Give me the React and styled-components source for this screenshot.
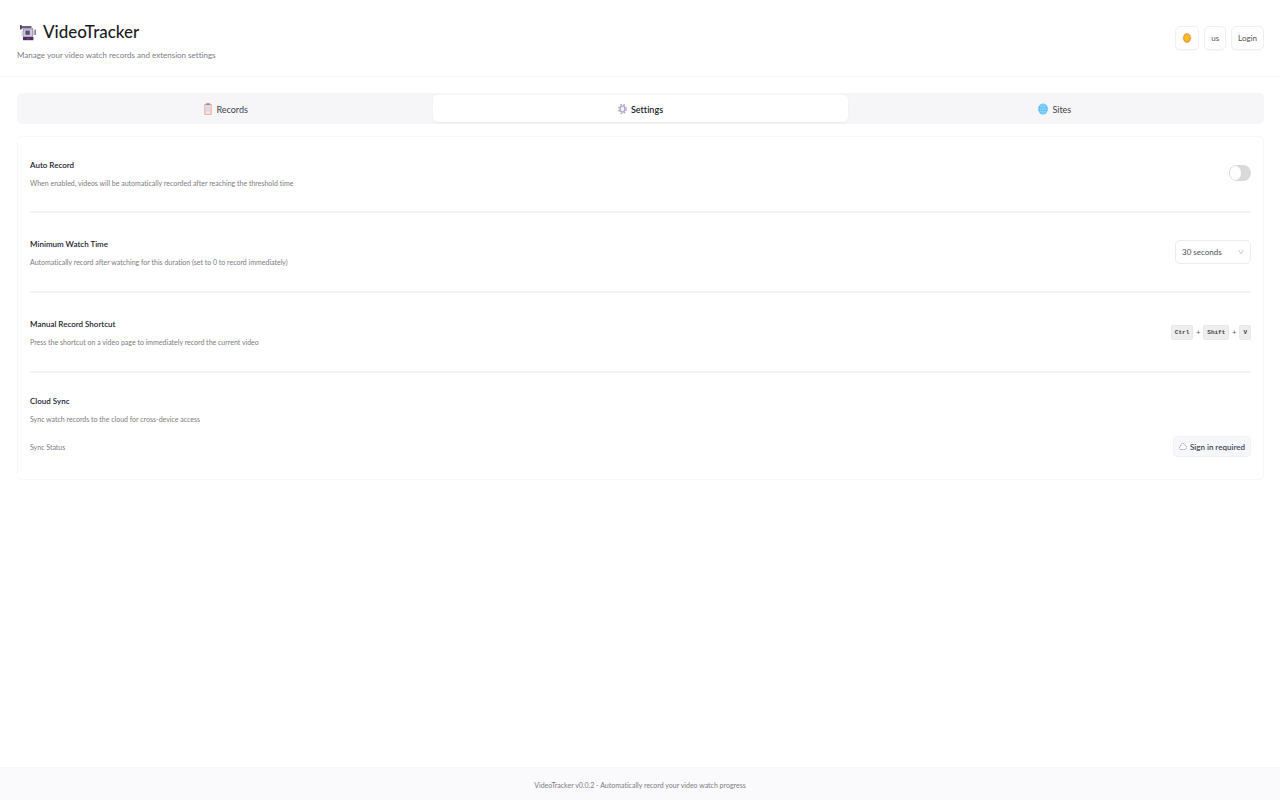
import React, { useState } from "react";
import styled, { createGlobalStyle } from "styled-components";

const TABS = [
  { id: "records", label: "Records", icon: ClipboardIcon },
  { id: "settings", label: "Settings", icon: GearIcon },
  { id: "sites", label: "Sites", icon: GlobeIcon },
];

const SHORTCUT = ["Ctrl", "Shift", "V"];

function CameraIcon() {
  return (
    <svg width="18" height="20" viewBox="0 0 18 20" aria-hidden="true">
      <path d="M1.5 4h11v2.5h-11z" fill="#6a6080" />
      <path d="M1 3h1.6v4.6H1z" fill="#4a3f5c" />
      <rect x="3.8" y="6" width="10.4" height="9.5" fill="#a79fb9" />
      <rect x="5" y="7.5" width="8" height="6.8" fill="#cdc8da" />
      <rect x="6.4" y="8.6" width="4.4" height="4.2" fill="#5a4f6e" />
      <path d="M2.6 9h1.8v5H2.6z" fill="#d5d0e0" />
      <path d="M14.2 8.5h1.3v4.5h-1.3z" fill="#cdc8da" />
      <rect x="15.4" y="7.6" width="1.6" height="5.4" fill="#8d84a2" />
      <rect x="4" y="15" width="10.4" height="3.2" fill="#4b2f63" />
      <rect x="7.6" y="16" width="2.8" height="1.2" fill="#a03a6a" />
    </svg>
  );
}

function SunIcon() {
  return (
    <svg width="10" height="10" viewBox="0 0 10 10" aria-hidden="true">
      <ellipse cx="5" cy="5" rx="3.7" ry="4.6" fill="#f3a23a" />
      <ellipse cx="5" cy="5" rx="3.7" ry="4.5" fill="none" stroke="#e8862c" strokeWidth=".8" strokeDasharray="1.4 .8" />
      <ellipse cx="5" cy="5" rx="2.4" ry="3.2" fill="#fcc021" />
    </svg>
  );
}

function ClipboardIcon() {
  return (
    <svg width="8" height="12" viewBox="0 0 8 12" aria-hidden="true">
      <rect x=".4" y=".8" width="7.2" height="11" rx=".8" fill="#e8a37e" />
      <rect x="1.4" y="2" width="5.2" height="8.8" fill="#efeaf5" />
      <rect x="2.4" y=".3" width="3.2" height="2" rx=".5" fill="#8f86a3" />
      <path d="M2.2 4.4h3.6M2.2 6.2h3.6M2.2 8h3.6" stroke="#c3bcd6" strokeWidth=".7" />
    </svg>
  );
}

function GearIcon() {
  return (
    <svg width="9" height="12" viewBox="0 0 9 12" aria-hidden="true">
      <ellipse cx="4.5" cy="6" rx="3.7" ry="4.6" fill="none" stroke="#b5abcf" strokeWidth="1.4" strokeDasharray="1.7 1.65" />
      <ellipse cx="4.5" cy="6" rx="2.4" ry="3.1" fill="#f5f2fa" stroke="#b0a6cb" strokeWidth="1.4" />
    </svg>
  );
}

function GlobeIcon() {
  return (
    <svg width="10" height="12" viewBox="0 0 10 12" aria-hidden="true">
      <ellipse cx="5" cy="6" rx="4.8" ry="5.6" fill="#48b9f2" />
      <g fill="none" stroke="#b4e4fb" strokeWidth=".6">
        <ellipse cx="5" cy="6" rx="2.2" ry="5.5" />
        <path d="M5 .5v11M.3 6h9.4M1 3.2h8M1 8.8h8" />
      </g>
    </svg>
  );
}

function CloudIcon() {
  return (
    <svg width="8" height="9" viewBox="0 0 8 9" aria-hidden="true">
      <path
        d="M1.8 7.5C.8 7.5.4 6.7.4 5.9c0-.9.5-1.5 1.2-1.6C1.6 2.7 2.6 1.5 4 1.5c1.2 0 2 .9 2.2 2.1.9.2 1.4.9 1.4 1.9s-.6 2-1.6 2z"
        fill="#fff"
        stroke="#8f8f99"
        strokeWidth=".7"
        strokeDasharray="1.6 .5"
      />
    </svg>
  );
}

function ChevronIcon() {
  return (
    <svg width="6" height="6" viewBox="0 0 6 6" aria-hidden="true">
      <path d="M.5 1 3 4.8 5.5 1" fill="none" stroke="#bcbcc0" strokeWidth=".8" />
    </svg>
  );
}

export default function App() {
  const [activeTab, setActiveTab] = useState("settings");
  const [autoRecord, setAutoRecord] = useState(false);
  const [minTime, setMinTime] = useState("30");

  return (
    <Page>
      <GlobalStyle />
      <Header>
        <div>
          <Brand>
            <CameraIcon />
            VideoTracker
          </Brand>
          <Subtitle>Manage your video watch records and extension settings</Subtitle>
        </div>
        <Actions>
          <ActionButton type="button" aria-label="Toggle theme">
            <SunIcon />
          </ActionButton>
          <ActionButton type="button">us</ActionButton>
          <ActionButton type="button">Login</ActionButton>
        </Actions>
      </Header>

      <Main>
        <Tabs role="tablist">
          {TABS.map(({ id, label, icon: Icon }) => (
            <Tab
              key={id}
              type="button"
              role="tab"
              aria-selected={activeTab === id}
              $active={activeTab === id}
              onClick={() => setActiveTab(id)}
            >
              <Icon />
              {label}
            </Tab>
          ))}
        </Tabs>

        <Card>
          <Row>
            <div>
              <RowTitle as="label" htmlFor="auto-record">Auto Record</RowTitle>
              <RowText>
                When enabled, videos will be automatically recorded after reaching the threshold time
              </RowText>
            </div>
            <Switch
              id="auto-record"
              type="checkbox"
              checked={autoRecord}
              onChange={(e) => setAutoRecord(e.target.checked)}
            />
          </Row>
          <Row>
            <div>
              <RowTitle as="label" htmlFor="min-time">Minimum Watch Time</RowTitle>
              <RowText>
                Automatically record after watching for this duration (set to 0 to record immediately)
              </RowText>
            </div>
            <SelectBox>
              <Select id="min-time" value={minTime} onChange={(e) => setMinTime(e.target.value)}>
                <option value="30">30 seconds</option>
              </Select>
              <ChevronIcon />
            </SelectBox>
          </Row>
          <Row>
            <div>
              <RowTitle>Manual Record Shortcut</RowTitle>
              <RowText>Press the shortcut on a video page to immediately record the current video</RowText>
            </div>
            <Keys>
              {SHORTCUT.map((key, i) => (
                <React.Fragment key={key}>
                  {i > 0 && <span>+</span>}
                  <Key>{key}</Key>
                </React.Fragment>
              ))}
            </Keys>
          </Row>
          <Section>
            <RowTitle>Cloud Sync</RowTitle>
            <RowText>Sync watch records to the cloud for cross-device access</RowText>
            <StatusRow>
              <RowText>Sync Status</RowText>
              <Badge>
                <CloudIcon />
                Sign in required
              </Badge>
            </StatusRow>
          </Section>
        </Card>
      </Main>

      <Footer>VideoTracker v0.0.2 - Automatically record your video watch progress</Footer>
    </Page>
  );
}

const GlobalStyle = createGlobalStyle`
  * {
    box-sizing: border-box;
  }

  body {
    margin: 0;
    background: #fff;
    color: #1d1d1f;
    font-family: Lato, "Noto Sans", sans-serif;
    font-size: 8px;
    font-variant-ligatures: none;
  }

  button,
  select {
    font-family: inherit;
    font-variant-ligatures: inherit;
  }

  svg {
    display: block;
    flex: none;
  }
`;

const Page = styled.div`
  display: flex;
  flex-direction: column;
  min-height: 100vh;
`;

const Header = styled.header`
  display: flex;
  align-items: flex-start;
  justify-content: space-between;
  padding: 18px 16px 12px;
  border-bottom: 1px solid #f5f5f7;
`;

const Brand = styled.h1`
  display: flex;
  align-items: center;
  gap: 6px;
  margin: 0;
  padding-left: 3px;
  font-size: 17px;
  font-weight: 500;
  line-height: 28px;
`;

const Subtitle = styled.p`
  margin: 0;
  padding-left: 1px;
  color: #7c7c81;
  font-size: 8px;
  line-height: 18px;
`;

const Actions = styled.div`
  display: flex;
  gap: 5px;
  padding-top: 8px;
`;

const ActionButton = styled.button`
  display: flex;
  align-items: center;
  justify-content: center;
  height: 24px;
  padding: 0 6px;
  border: 1px solid #f0f0f2;
  border-radius: 5px;
  background: #fff;
  box-shadow: 0 1px 1px rgba(0, 0, 0, 0.03);
  color: #515154;
  font-size: 8px;
`;

const Main = styled.main`
  display: flex;
  flex: 1;
  flex-direction: column;
  gap: 12px;
  padding: 16px 16px 24px 17px;
`;

const Tabs = styled.div`
  display: flex;
  padding: 2px;
  border-radius: 5px;
  background: #f6f6f9;
`;

const Tab = styled.button`
  display: flex;
  flex: 1;
  align-items: center;
  justify-content: center;
  gap: 4px;
  height: 27px;
  padding: 1px 0 0;
  border: 0;
  border-radius: 5px;
  background: ${({ $active }) => ($active ? "#fff" : "transparent")};
  box-shadow: ${({ $active }) => ($active ? "0 1px 2px rgba(0, 0, 0, 0.05)" : "none")};
  color: ${({ $active }) => ($active ? "#1d1d1f" : "#424245")};
  font-size: 9px;
  font-weight: ${({ $active }) => ($active ? 600 : 400)};
`;

const Card = styled.section`
  padding: 0 12px;
  border: 1px solid #f8f8fa;
  border-radius: 5px;
`;

const Row = styled.div`
  display: flex;
  align-items: center;
  justify-content: space-between;
  padding: 21px 0;
  border-bottom: 2px solid #f3f3f8;

  &:first-child {
    padding: 18px 0 20px;
  }
`;

const RowTitle = styled.h2`
  display: block;
  margin: 0;
  color: #1a1a2e;
  font-size: 8px;
  font-weight: 600;
  line-height: 20px;
`;

const RowText = styled.p`
  margin: 0;
  color: #7c7c81;
  font-size: 7px;
  line-height: 16px;
`;

const Switch = styled.input`
  display: flex;
  align-items: center;
  width: 22px;
  height: 16px;
  margin: 0;
  padding: 1px;
  border-radius: 8px;
  background: #d9d9d9;
  appearance: none;

  &::before {
    content: "";
    width: 11px;
    height: 14px;
    border-radius: 50%;
    background: #fff;
  }

  &:checked {
    justify-content: flex-end;
    background: #34c759;
  }
`;

const SelectBox = styled.div`
  display: flex;
  align-items: center;
  width: 76px;
  height: 24px;
  padding-right: 6px;
  border: 1px solid #ececf0;
  border-radius: 5px;
  background: #fff;
`;

const Select = styled.select`
  flex: 1;
  min-width: 0;
  height: 22px;
  padding: 0 0 0 6px;
  border: 0;
  background: transparent;
  color: #515154;
  font-size: 8px;
  appearance: none;
`;

const Keys = styled.div`
  display: flex;
  align-items: center;
  gap: 3px;
  color: #515154;
  font-size: 7px;
`;

const Key = styled.kbd`
  height: 15px;
  padding: 0 3px;
  border: 1px solid #e8e8ea;
  border-radius: 2px;
  background: #eeeeef;
  color: #424245;
  font-family: "Liberation Mono", monospace;
  font-size: 6px;
  font-weight: 700;
  line-height: 13px;
`;

const Section = styled.div`
  padding: 18px 0 22px;
`;

const StatusRow = styled.div`
  display: flex;
  align-items: center;
  justify-content: space-between;
  margin-top: 9px;
`;

const Badge = styled.span`
  display: flex;
  align-items: center;
  gap: 3px;
  height: 21px;
  padding: 0 5px;
  border: 1px solid #f0f0f6;
  border-radius: 4px;
  background: #f6f7fb;
  color: #3f3f55;
  font-size: 8px;
  font-weight: 600;
`;

const Footer = styled.footer`
  padding: 10px 0 8px;
  border-top: 1px solid #f7f7f9;
  background: #fafafc;
  color: #7c7c81;
  font-size: 7px;
  line-height: 14px;
  text-align: center;
`;
